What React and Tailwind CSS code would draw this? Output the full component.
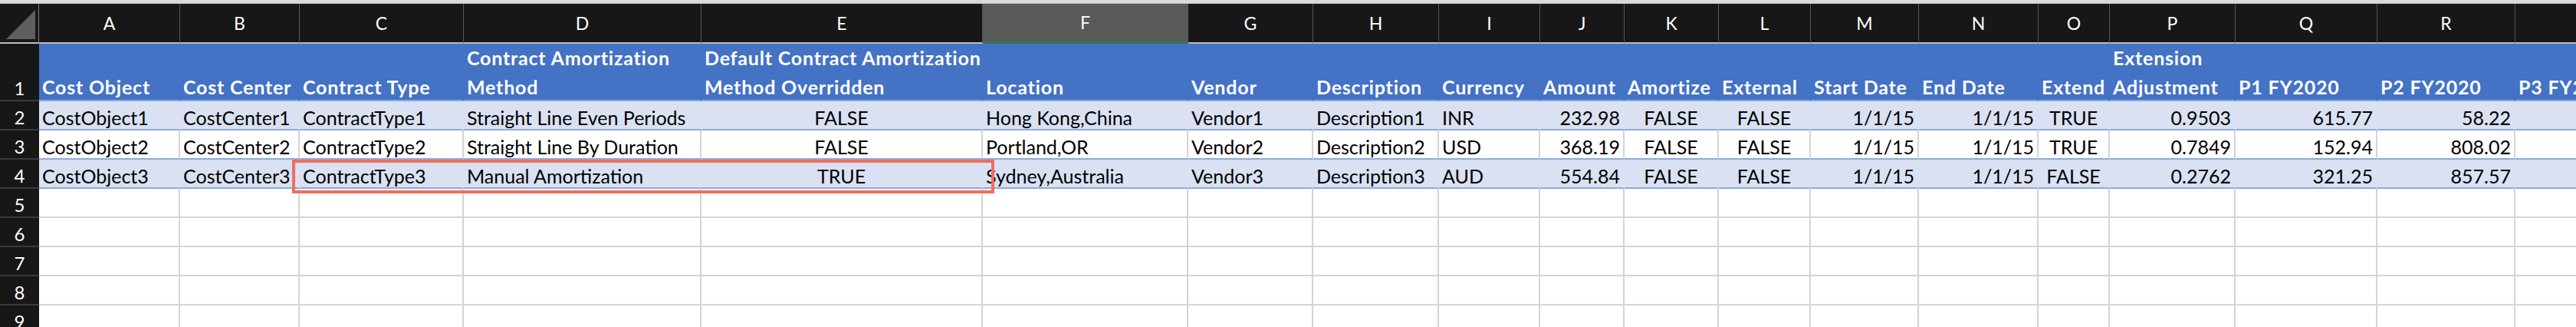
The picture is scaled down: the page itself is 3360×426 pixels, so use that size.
import React from "react";

// column widths measured off the sheet, A..S
const COLS = [
  { id: "A", w: "w-[184px]", a: "justify-start" },
  { id: "B", w: "w-[156px]", a: "justify-start" },
  { id: "C", w: "w-[214px]", a: "justify-start" },
  { id: "D", w: "w-[310px]", a: "justify-start" },
  { id: "E", w: "w-[367px]", a: "justify-center" },
  { id: "F", w: "w-[268px]", a: "justify-start" },
  { id: "G", w: "w-[163px]", a: "justify-start" },
  { id: "H", w: "w-[164px]", a: "justify-start" },
  { id: "I", w: "w-[132px]", a: "justify-start" },
  { id: "J", w: "w-[110px]", a: "justify-end" },
  { id: "K", w: "w-[123px]", a: "justify-center" },
  { id: "L", w: "w-[120px]", a: "justify-center" },
  { id: "M", w: "w-[141px]", a: "justify-end" },
  { id: "N", w: "w-[156px]", a: "justify-end" },
  { id: "O", w: "w-[93px]", a: "justify-center" },
  { id: "P", w: "w-[164px]", a: "justify-end" },
  { id: "Q", w: "w-[185px]", a: "justify-end" },
  { id: "R", w: "w-[180px]", a: "justify-end" },
  { id: "S", w: "w-[200px]", a: "justify-end" },
];

const HEADERS = [
  ["Cost Object"],
  ["Cost Center"],
  ["Contract Type"],
  ["Contract Amortization", "Method"],
  ["Default Contract Amortization", "Method Overridden"],
  ["Location"],
  ["Vendor"],
  ["Description"],
  ["Currency"],
  ["Amount"],
  ["Amortize"],
  ["External"],
  ["Start Date"],
  ["End Date"],
  ["Extend"],
  ["Extension", "Adjustment"],
  ["P1 FY2020"],
  ["P2 FY2020"],
  ["P3 FY2020"],
];

const ROWS = [
  ["CostObject1", "CostCenter1", "ContractType1", "Straight Line Even Periods", "FALSE", "Hong Kong,China", "Vendor1", "Description1", "INR", "232.98", "FALSE", "FALSE", "1/1/15", "1/1/15", "TRUE", "0.9503", "615.77", "58.22", ""],
  ["CostObject2", "CostCenter2", "ContractType2", "Straight Line By Duration", "FALSE", "Portland,OR", "Vendor2", "Description2", "USD", "368.19", "FALSE", "FALSE", "1/1/15", "1/1/15", "TRUE", "0.7849", "152.94", "808.02", ""],
  ["CostObject3", "CostCenter3", "ContractType3", "Manual Amortization", "TRUE", "Sydney,Australia", "Vendor3", "Description3", "AUD", "554.84", "FALSE", "FALSE", "1/1/15", "1/1/15", "FALSE", "0.2762", "321.25", "857.57", ""],
];

const TONES = {
  head: "bg-[#4472c4] text-white font-bold tracking-[0.8px] border-r-transparent border-b-[#8ea9db]",
  band: "bg-[#d9e1f2] border-r-transparent border-b-[#8ea9db]",
  plain: "bg-white border-r-[#d4d4d4] border-b-[#8ea9db]",
  empty: "bg-white border-r-[#d4d4d4] border-b-[#d4d4d4]",
};

const RowNum = ({ n }) => (
  <div className="w-[51px] shrink-0 flex items-end justify-center bg-[#171717] text-white text-[24px] border-b-2 border-b-[#3a3a3a] pb-[1px] leading-[28px]">
    {n}
  </div>
);

const Row = ({ n, tone, cells, tall }) => (
  <div className={`flex shrink-0 ${tall ? "h-[75px]" : "h-[38px]"}`}>
    <RowNum n={n} />
    {COLS.map((c, i) => (
      <div
        key={c.id}
        className={`${c.w} ${tone === "head" ? "justify-start" : c.a} ${TONES[tone]} shrink-0 flex items-end border-r-2 border-b-2 px-[4px] pb-[1px] whitespace-nowrap leading-[28px]`}
      >
        {cells && cells[i]}
      </div>
    ))}
  </div>
);

const ColumnLetters = () => (
  <div className="flex h-[52px] shrink-0">
    <div className="w-[51px] shrink-0 bg-[#171717] border-b-2 border-b-[#bdbdbd] border-r border-r-[#7a7a7a]">
      <svg width="50" height="50" viewBox="0 0 50 50">
        <polygon points="8,46 46,8 46,46" fill="#5e5e5e" />
      </svg>
    </div>
    {COLS.map((c) => (
      <div
        key={c.id}
        className={`${c.w} shrink-0 flex items-center justify-center border-r border-r-[#555555] text-white text-[23px] ${
          c.id === "F"
            ? "bg-[#595959] border-b-[3px] border-b-[#3b7251]"
            : "bg-[#171717] border-b-2 border-b-[#bdbdbd]"
        }`}
      >
        {c.id}
      </div>
    ))}
  </div>
);

export default function App() {
  return (
    <div className="relative w-[3360px] h-[426px] overflow-hidden bg-white font-['Lato',sans-serif] text-[25px] text-black flex flex-col">
      <div className="h-[5px] shrink-0 bg-[#dadada] border-b border-b-[#bcbcbc]" />
      <ColumnLetters />
      <Row
        n={1}
        tall
        tone="head"
        cells={HEADERS.map((h, i) => (
          <div key={i} className="leading-[38px] -mb-[3px]">
            {h.map((line, j) => (
              <div key={j}>{line}</div>
            ))}
          </div>
        ))}
      />
      <Row n={2} tone="band" cells={ROWS[0]} />
      <Row n={3} tone="plain" cells={ROWS[1]} />
      <Row n={4} tone="band" cells={ROWS[2]} />
      {[5, 6, 7, 8, 9].map((n) => (
        <Row key={n} n={n} tone="empty" />
      ))}

      {/* annotation box drawn over rows C4:E4 */}
      <div className="absolute left-[381px] top-[208px] w-[916px] h-[44px] border-4 border-[#ef6f5a] pointer-events-none" />
    </div>
  );
}
